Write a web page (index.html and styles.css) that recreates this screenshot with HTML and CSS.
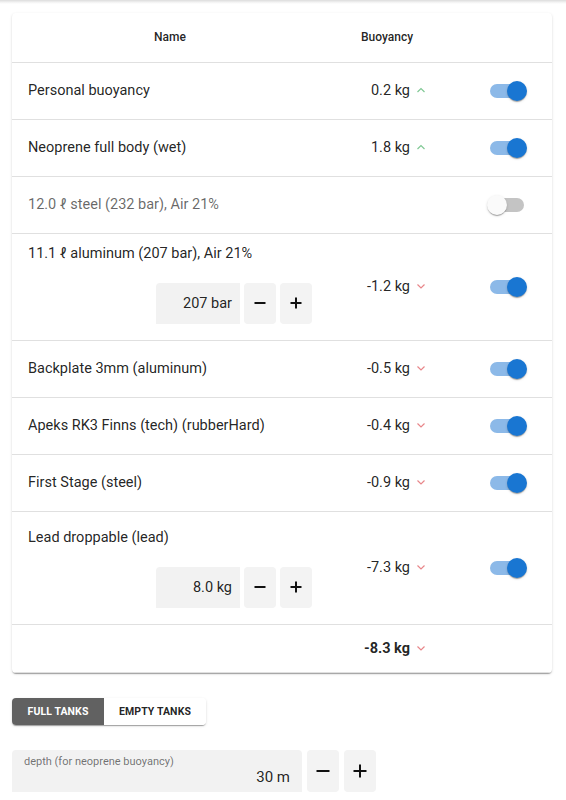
FILE: index.html
```html
<!DOCTYPE html>
<html>
<head>
<meta charset="utf-8">
<link rel="stylesheet" href="styles.css">
</head>
<body>
<div class="topbar"></div>
<main class="page">
  <div class="card">
    <table class="gear">
      <colgroup><col class="c-name"><col class="c-buoy"><col class="c-sw"></colgroup>
      <thead>
        <tr><th>Name</th><th>Buoyancy</th><th></th></tr>
      </thead>
      <tbody>
        <tr>
          <td class="name">Personal buoyancy</td>
          <td class="val">0.2 kg<svg class="arr" width="14" height="10" viewBox="0 0 14 10"><polyline class="up" points="1.5,7 5,3.5 8.5,7"/></svg></td>
          <td class="sw"><span class="switch on"><span class="track"></span><span class="thumb"></span></span></td>
        </tr>
        <tr>
          <td class="name">Neoprene full body (wet)</td>
          <td class="val">1.8 kg<svg class="arr" width="14" height="10" viewBox="0 0 14 10"><polyline class="up" points="1.5,7 5,3.5 8.5,7"/></svg></td>
          <td class="sw"><span class="switch on"><span class="track"></span><span class="thumb"></span></span></td>
        </tr>
        <tr class="off">
          <td class="name">12.0 ℓ steel (232 bar), Air 21%</td>
          <td class="val"></td>
          <td class="sw"><span class="switch"><span class="track"></span><span class="thumb"></span></span></td>
        </tr>
        <tr class="tall">
          <td class="name">
            <div class="label">11.1 ℓ aluminum (207 bar), Air 21%</div>
            <div class="stepper">
              <div class="box">207 bar</div>
              <button class="btn"><svg width="12" height="12" viewBox="0 0 12 12"><line x1="0.5" y1="6" x2="11.5" y2="6"/></svg></button>
              <button class="btn"><svg width="12" height="12" viewBox="0 0 12 12"><line x1="0.5" y1="6" x2="11.5" y2="6"/><line x1="6" y1="0.5" x2="6" y2="11.5"/></svg></button>
            </div>
          </td>
          <td class="val">-1.2 kg<svg class="arr" width="14" height="10" viewBox="0 0 14 10"><polyline class="down" points="1.5,3.5 5,7 8.5,3.5"/></svg></td>
          <td class="sw"><span class="switch on"><span class="track"></span><span class="thumb"></span></span></td>
        </tr>
        <tr>
          <td class="name">Backplate 3mm (aluminum)</td>
          <td class="val">-0.5 kg<svg class="arr" width="14" height="10" viewBox="0 0 14 10"><polyline class="down" points="1.5,3.5 5,7 8.5,3.5"/></svg></td>
          <td class="sw"><span class="switch on"><span class="track"></span><span class="thumb"></span></span></td>
        </tr>
        <tr>
          <td class="name">Apeks RK3 Finns (tech) (rubberHard)</td>
          <td class="val">-0.4 kg<svg class="arr" width="14" height="10" viewBox="0 0 14 10"><polyline class="down" points="1.5,3.5 5,7 8.5,3.5"/></svg></td>
          <td class="sw"><span class="switch on"><span class="track"></span><span class="thumb"></span></span></td>
        </tr>
        <tr>
          <td class="name">First Stage (steel)</td>
          <td class="val">-0.9 kg<svg class="arr" width="14" height="10" viewBox="0 0 14 10"><polyline class="down" points="1.5,3.5 5,7 8.5,3.5"/></svg></td>
          <td class="sw"><span class="switch on"><span class="track"></span><span class="thumb"></span></span></td>
        </tr>
        <tr class="tall taller">
          <td class="name">
            <div class="label">Lead droppable (lead)</div>
            <div class="stepper">
              <div class="box">8.0 kg</div>
              <button class="btn"><svg width="12" height="12" viewBox="0 0 12 12"><line x1="0.5" y1="6" x2="11.5" y2="6"/></svg></button>
              <button class="btn"><svg width="12" height="12" viewBox="0 0 12 12"><line x1="0.5" y1="6" x2="11.5" y2="6"/><line x1="6" y1="0.5" x2="6" y2="11.5"/></svg></button>
            </div>
          </td>
          <td class="val">-7.3 kg<svg class="arr" width="14" height="10" viewBox="0 0 14 10"><polyline class="down" points="1.5,3.5 5,7 8.5,3.5"/></svg></td>
          <td class="sw"><span class="switch on"><span class="track"></span><span class="thumb"></span></span></td>
        </tr>
        <tr class="total">
          <td class="name"></td>
          <td class="val"><b>-8.3 kg</b><svg class="arr" width="14" height="10" viewBox="0 0 14 10"><polyline class="down" points="1.5,3.5 5,7 8.5,3.5"/></svg></td>
          <td class="sw"></td>
        </tr>
      </tbody>
    </table>
  </div>

  <div class="toggle-group">
    <button class="tg active">FULL TANKS</button>
    <button class="tg">EMPTY TANKS</button>
  </div>

  <div class="depth">
    <div class="field">
      <span class="flabel">depth (for neoprene buoyancy)</span>
      <span class="fvalue">30 m</span>
    </div>
    <button class="btn big"><svg width="14" height="14" viewBox="0 0 14 14"><line x1="0.5" y1="7" x2="13.5" y2="7"/></svg></button>
    <button class="btn big"><svg width="14" height="14" viewBox="0 0 14 14"><line x1="0.5" y1="7" x2="13.5" y2="7"/><line x1="7" y1="0.5" x2="7" y2="13.5"/></svg></button>
  </div>
</main>
</body>
</html>
```

FILE: styles.css
```css
* { box-sizing: border-box; }
html, body { margin: 0; padding: 0; background: #fff; }
body {
  font-family: Roboto, "Liberation Sans", sans-serif;
  color: rgba(0,0,0,0.87);
  width: 566px;
  height: 800px;
  overflow: hidden;
}
.topbar {
  height: 4px;
  background: linear-gradient(#dcdcdc, #f4f4f4 60%, #ffffff);
}
.page {
  padding: 9px 12px 0 14px;
  padding-left: 12px;
  padding-right: 14px;
}
.card {
  background: #fff;
  border-radius: 4px;
  box-shadow: 0 2px 1px -1px rgba(0,0,0,0.2), 0 1px 1px 0 rgba(0,0,0,0.14), 0 1px 3px 0 rgba(0,0,0,0.12);
  overflow: hidden;
}
.gear {
  width: 540px;
  border-collapse: collapse;
  table-layout: fixed;
}
.c-name { width: 316px; }
.c-buoy { width: 118px; }
.c-sw { width: 106px; }
.gear th {
  height: 49px;
  font-size: 12px;
  font-weight: 500;
  color: rgba(0,0,0,0.87);
  text-align: center;
  padding: 0 16px;
  border-bottom: 1px solid #e0e0e0;
}
.gear td {
  height: 57px;
  padding: 0 16px;
  font-size: 14.5px;
  border-bottom: 1px solid #e0e0e0;
  vertical-align: middle;
}
.gear td.name { text-align: left; }
.gear td.val {
  text-align: right;
  white-space: nowrap;
}
.arr {
  margin-left: 6px;
  vertical-align: 0px;
}
.arr polyline {
  fill: none;
  stroke-width: 1.2;
}
.arr .up { stroke: #81c995; }
.arr .down { stroke: #e8868a; }
.gear td.sw { text-align: right; padding-right: 16px; }
.off td.name { color: rgba(0,0,0,0.6); }
.gear tr.tall td { height: 107px; }
.gear tr.taller td { height: 113px; }
.gear tr.tall td.name {
  vertical-align: top;
  padding-top: 8px;
}
.gear tr.taller td.name { padding-top: 14px; }
.label { line-height: 24px; }
.stepper {
  display: flex;
  justify-content: flex-end;
  gap: 4px;
  margin-top: 17px;
}
.box {
  width: 84px;
  height: 41px;
  background: #f2f2f2;
  border-radius: 4px 0 0 0;
  text-align: right;
  padding-right: 8px;
  line-height: 41px;
  font-size: 14.5px;
}
.btn {
  width: 32px;
  height: 41px;
  border: 0;
  border-radius: 4px;
  background: #f3f3f3;
  padding: 0;
  display: flex;
  align-items: center;
  justify-content: center;
  font: inherit;
}
.btn svg line { stroke: #111; stroke-width: 2; }
.total td { height: 48px; }
.total b { font-weight: 700; font-size: 14.5px; }

.switch {
  position: relative;
  display: inline-block;
  width: 58px;
  height: 38px;
  vertical-align: middle;
}
.switch .track {
  position: absolute;
  left: 12px;
  top: 12px;
  width: 34px;
  height: 14px;
  border-radius: 7px;
  background: #c4c4c4;
}
.switch .thumb {
  position: absolute;
  left: 9px;
  top: 9px;
  width: 20px;
  height: 20px;
  border-radius: 50%;
  background: #fafafa;
  box-shadow: 0 2px 1px -1px rgba(0,0,0,0.2), 0 1px 1px 0 rgba(0,0,0,0.14), 0 1px 3px 0 rgba(0,0,0,0.12);
}
.switch.on .track { background: #8cb9e8; }
.switch.on .thumb { left: 29px; background: #1976d2; }

.toggle-group {
  display: inline-flex;
  margin-top: 25px;
  border-radius: 4px;
  box-shadow: 0 2px 1px -1px rgba(0,0,0,0.2), 0 1px 1px 0 rgba(0,0,0,0.14), 0 1px 3px 0 rgba(0,0,0,0.12);
  overflow: hidden;
}
.tg {
  height: 27px;
  border: 0;
  background: #fff;
  font-family: Roboto, "Liberation Sans", sans-serif;
  font-size: 10.5px;
  font-weight: 700;
  color: rgba(0,0,0,0.87);
  padding: 0;
  width: 102px;
  letter-spacing: 0.1px;
}
.tg.active {
  width: 92px;
  background: #616161;
  color: #fff;
}
.depth {
  display: flex;
  gap: 5px;
  margin-top: 25px;
}
.field {
  position: relative;
  width: 290px;
  height: 42px;
  background: #f2f2f2;
  border-radius: 4px 4px 0 0;
}
.flabel {
  position: absolute;
  left: 12px;
  top: 5px;
  font-size: 11px;
  color: rgba(0,0,0,0.55);
}
.fvalue {
  position: absolute;
  right: 12px;
  top: 17px;
  font-size: 15px;
  line-height: 20px;
}
.btn.big { height: 42px; width: 32px; }
.btn.big svg line { stroke-width: 2; }
```
